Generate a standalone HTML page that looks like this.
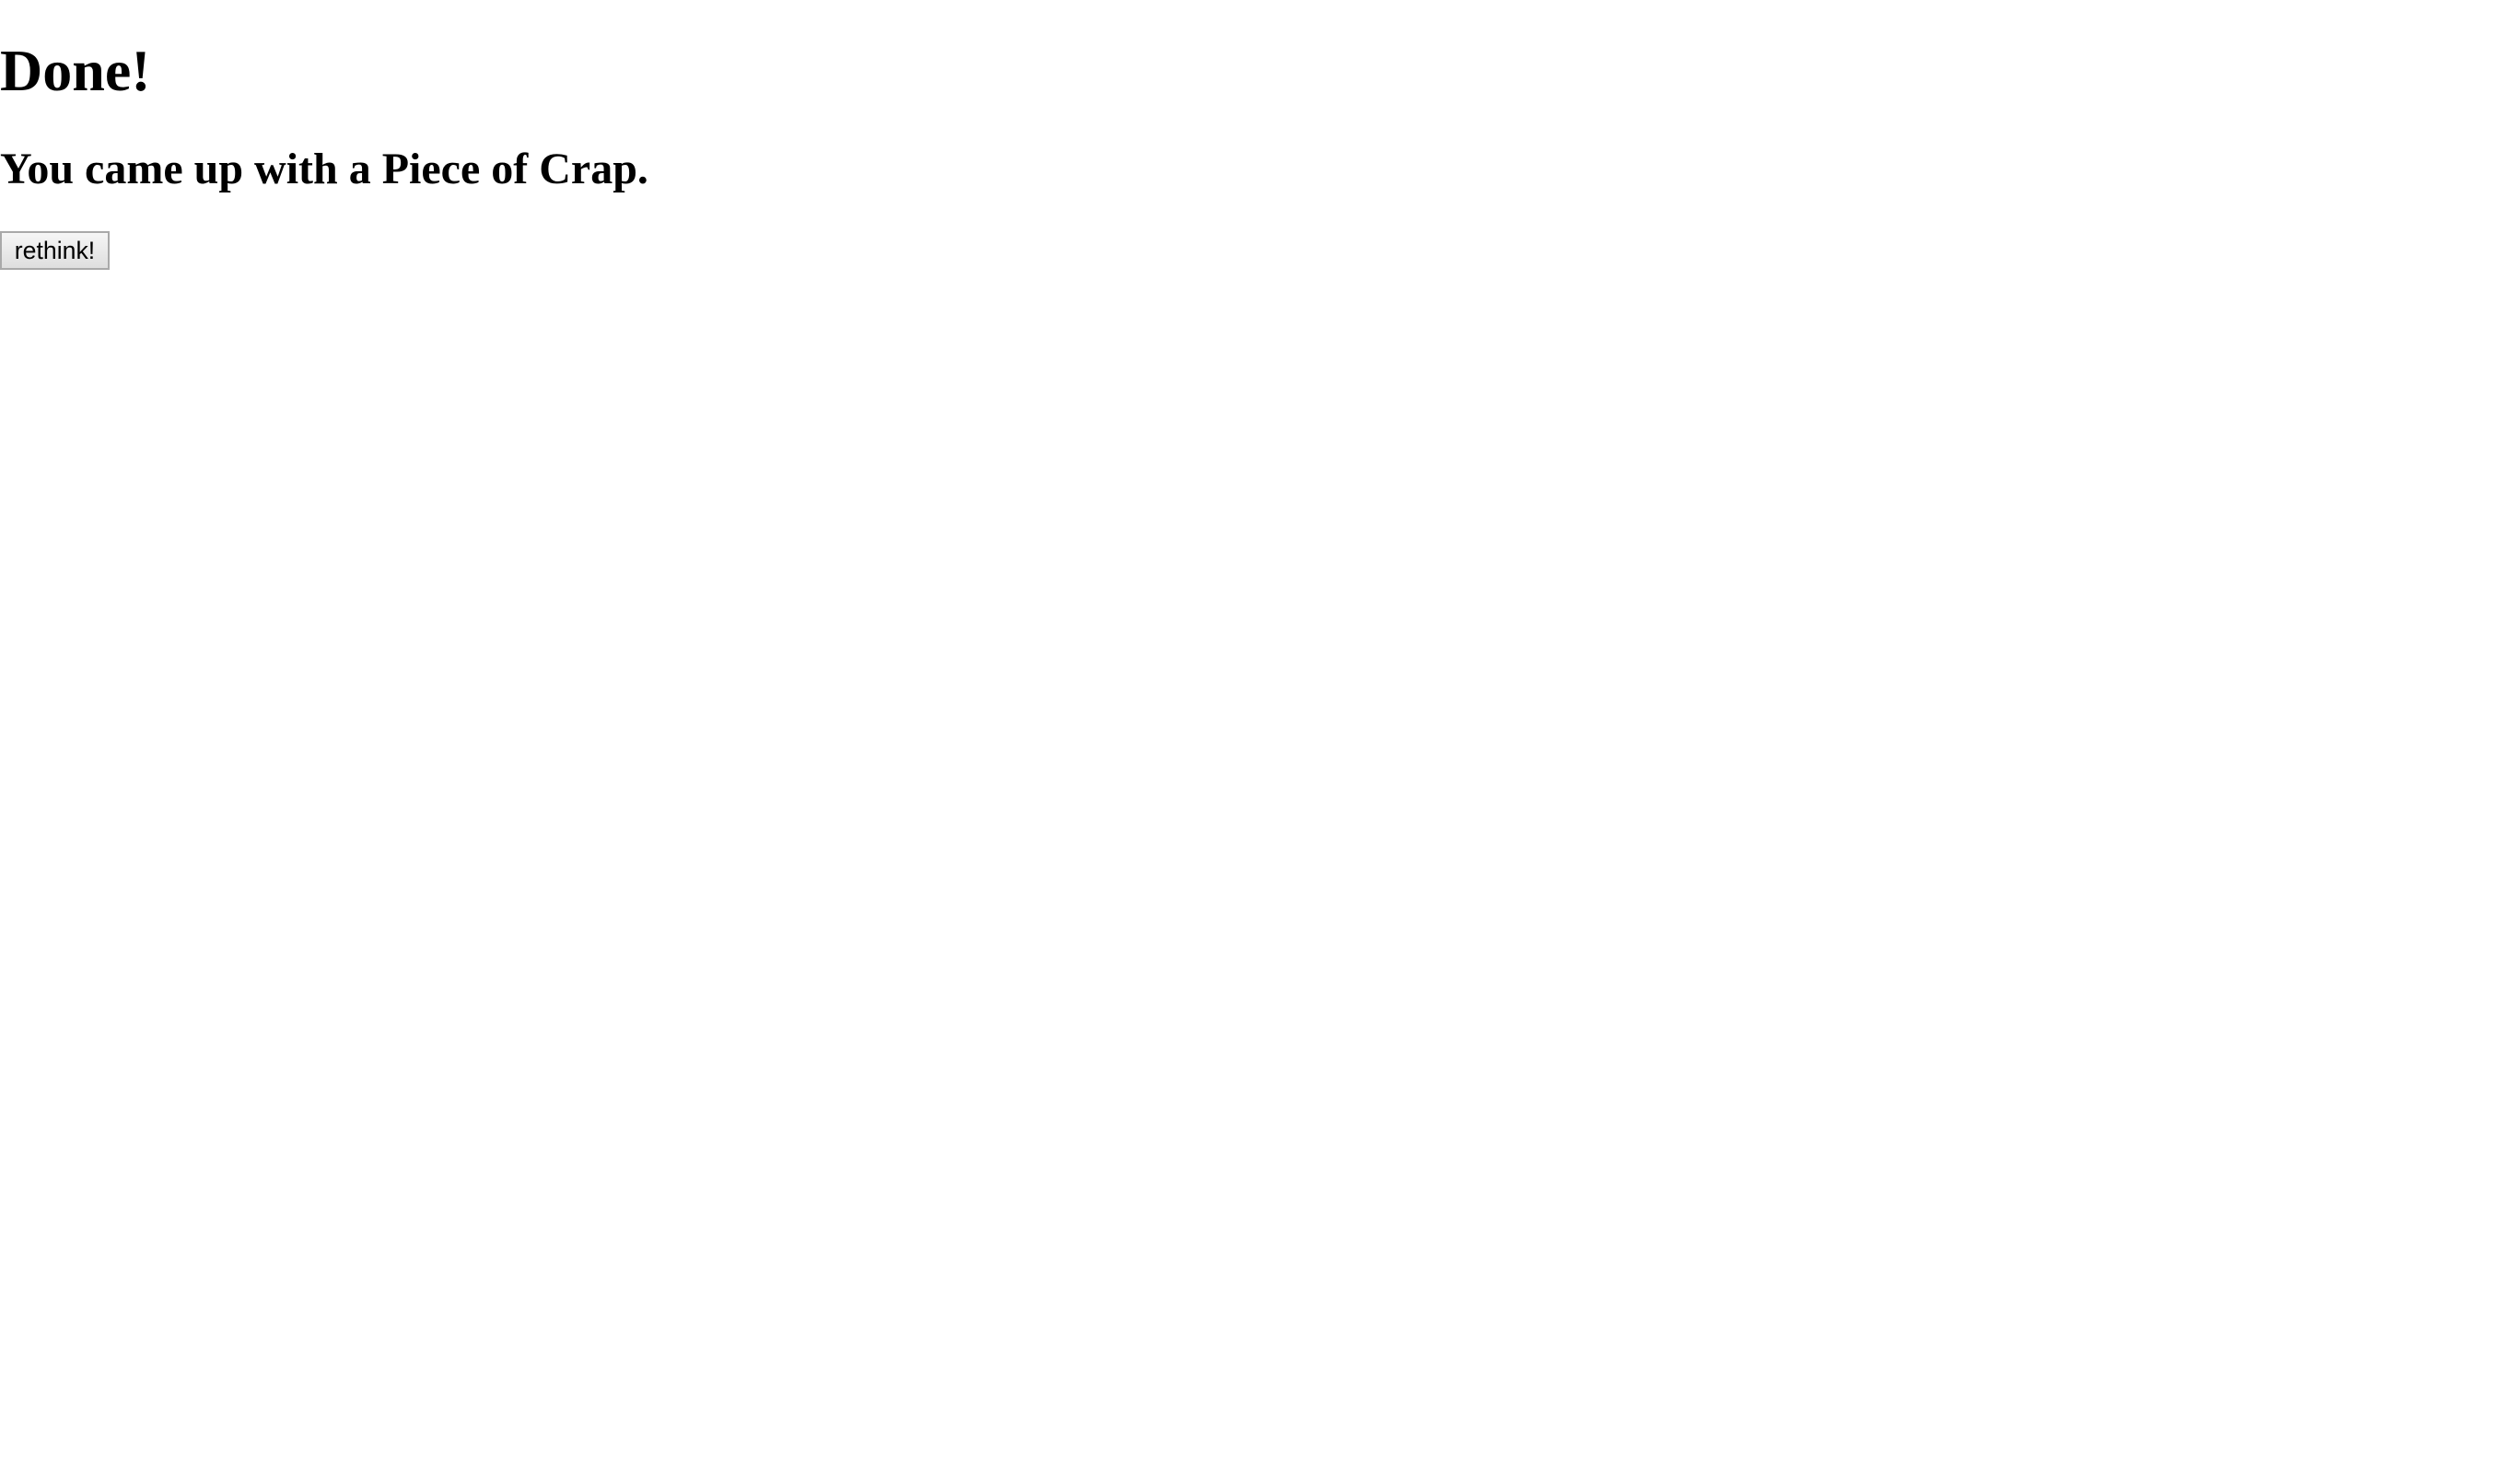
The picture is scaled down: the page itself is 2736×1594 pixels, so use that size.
<!DOCTYPE html>
<html><head><meta charset="utf-8"><style>
html,body{margin:0;padding:0;background:#fff;width:2736px;height:1594px;overflow:hidden;}
body{font-family:"Liberation Serif",serif;color:#000;}
h1{font-size:64px;font-weight:bold;margin:39.5px 0 42.88px;line-height:73.6px;}
h2{font-size:48px;font-weight:bold;margin:39.84px 0;line-height:55.2px;}
button{font-family:"Liberation Sans",Arial,sans-serif;font-size:26.67px;height:42px;width:119px;padding:0;margin:0;
border:2px solid #a9a9a9;border-radius:0;background:linear-gradient(#f6f6f6,#dedede);color:#000;display:block;}
</style></head><body>
<h1>Done!</h1>
<h2>You came up with a Piece of Crap.</h2>
<button>rethink!</button>
</body></html>
